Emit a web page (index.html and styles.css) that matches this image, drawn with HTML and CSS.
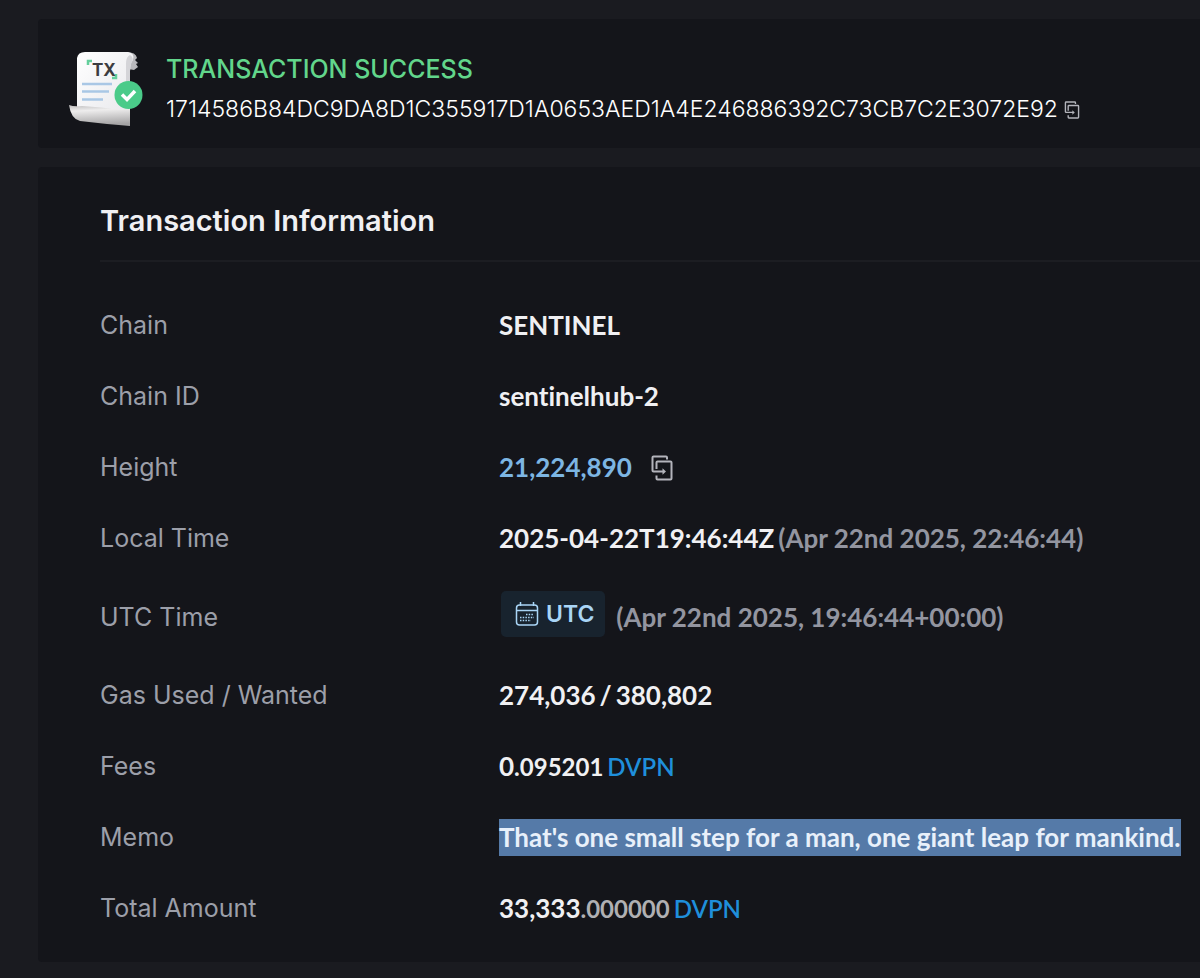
FILE: index.html
```html
<!DOCTYPE html>
<html lang="en">
<head>
<meta charset="utf-8">
<meta name="viewport" content="width=device-width, initial-scale=1">
<title>Transaction</title>
<link rel="stylesheet" href="styles.css">
</head>
<body>
<svg class="sprite" aria-hidden="true">
  <symbol id="copy" viewBox="0 0 22 26">
    <path d="M16 4.500V2.500Q16 1.500 15 1.500H2.500Q1.500 1.500 1.500 2.500V15.500Q1.500 16.500 2.500 16.500H13M5.500 14V7.500Q5.500 6.500 6.500 6.500H19.500Q20.500 6.500 20.500 7.500V23.500Q20.500 24.500 19.500 24.500H6.500Q5.500 24.500 5.500 23.500V20.500" fill="none" stroke="currentColor" stroke-width="2"/>
    <path d="M11.500 13.200L15 16.500L11.500 19.800Z" fill="currentColor"/>
  </symbol>
</svg>
<main class="page">
  <header class="card summary">
    <svg class="receipt" viewBox="0 0 76 80" role="img" aria-label="Transaction receipt">
      <defs>
        <linearGradient id="paper" x1="0" y1="0" x2="1" y2="1"><stop offset="0" stop-color="#fff"/><stop offset="1" stop-color="#e6e6ea"/></linearGradient>
        <linearGradient id="curl" x1="0" y1="0" x2="0.150" y2="1"><stop offset="0" stop-color="#bdbcbd"/><stop offset="0.300" stop-color="#eeeded"/><stop offset="1" stop-color="#a5a4a5"/></linearGradient>
      </defs>
      <path d="M58 3Q68 3 69 9L67 11L70 14L68 15L70 18L66 21L60 20Z" fill="#b9b9bd"/>
      <path d="M9 9Q10 3 17 3L60 3Q67 4 65 11Q62 14 62 22V74L9 62Z" fill="url(#paper)"/>
      <path d="M62 6Q67 9 63 15L62 22V58L58 52V14Q58 8 62 6Z" fill="#d4d4d8"/>
      <path d="M1 56Q6 58 14 57Q34 58 52 61Q60 61 62 56V77Q51 76 39 75L12 72Q3 70 1 56Z" fill="url(#curl)"/>
      <path d="M20 16V12H24M44 29H48V25" fill="none" stroke="#64cf9c" stroke-width="2.500"/>
      <text x="24" y="27" class="receipt-mark">TX</text>
      <path d="M14 35H44M14 42.500H41M14 50.500H35" stroke="#a9c7e5" stroke-width="2.500"/>
      <circle cx="60.500" cy="46" r="14" fill="#4acb89"/>
      <path d="M54 45.500L59 50.500L67 42" fill="none" stroke="#fff" stroke-width="3.500"/>
    </svg>
    <div class="summary-text">
      <p class="status">TRANSACTION SUCCESS</p>
      <p class="hash">1714586B84DC9DA8D1C355917D1A0653AED1A4E246886392C73CB7C2E3072E92
        <button class="copy copy-small" type="button" aria-label="Copy hash"><svg><use href="#copy"/></svg></button></p>
    </div>
  </header>
  <section class="card info">
    <h1 class="title">Transaction Information</h1>
    <dl class="rows">
      <div class="row"><dt>Chain</dt><dd>SENTINEL</dd></div>
      <div class="row"><dt>Chain ID</dt><dd>sentinelhub-2</dd></div>
      <div class="row"><dt>Height</dt><dd class="with-icon"><a class="height" href="#block">21,224,890</a><button class="copy" type="button" aria-label="Copy height"><svg><use href="#copy"/></svg></button></dd></div>
      <div class="row"><dt>Local Time</dt><dd class="pair"><span>2025-04-22T19:46:44Z</span><span class="muted">(Apr 22nd 2025, 22:46:44)</span></dd></div>
      <div class="row"><dt>UTC Time</dt><dd class="utc"><button class="badge" type="button">
        <svg class="calendar" viewBox="0 0 24 24" aria-hidden="true"><rect x="1.500" y="3" width="21" height="20" rx="3" fill="none" stroke="currentColor" stroke-width="1.500"/><path d="M5.500 0V4M18.500 0V4M1.500 8.500H22.500" stroke="currentColor" stroke-width="1.500"/><path d="M11 12.500H19M5 15.500H19M5 18.500H16" stroke="currentColor" stroke-width="1.500" stroke-dasharray="1.500 1.200"/></svg>UTC</button><span class="muted">(Apr 22nd 2025, 19:46:44+00:00)</span></dd></div>
      <div class="row"><dt>Gas Used / Wanted</dt><dd class="pair"><span>274,036</span><span>/</span><span>380,802</span></dd></div>
      <div class="row"><dt>Fees</dt><dd class="pair"><span>0<span class="decimals">.095201</span></span><a class="denom" href="#dvpn">DVPN</a></dd></div>
      <div class="row"><dt>Memo</dt><dd><mark class="memo">That's one small step for a man, one giant leap for mankind.</mark></dd></div>
      <div class="row"><dt>Total Amount</dt><dd class="pair"><span>33,333<span class="decimals faded">.000000</span></span><a class="denom" href="#dvpn">DVPN</a></dd></div>
    </dl>
  </section>
</main>
</body>
</html>
```
FILE: styles.css
```css
* { box-sizing: border-box; }
body {
  margin: 0;
  background: #1a1b20;
  color: #f0f0f3;
  font-family: Inter, "Liberation Sans", sans-serif;
}
p, h1, dl, dd { margin: 0; }
a { text-decoration: none; }
button { border: 0; background: none; font: inherit; }
.sprite { position: absolute; width: 0; height: 0; }
.page {
  display: flex;
  flex-direction: column;
  gap: 19px;
  padding: 19px 0 16px 38px;
}
.card { background: #14151a; border-radius: 4px 0 0 4px; }
.summary {
  display: flex;
  align-items: center;
  gap: 22px;
  padding: 30px 0 19px 30px;
}
.receipt { flex: none; width: 76px; height: 80px; }
.receipt-mark { font: 700 17px Inter, sans-serif; fill: #3c3c40; }
.status { color: #62d68b; font-size: 25px; font-weight: 500; line-height: 40px; }
.hash { color: #fff; font-size: 23px; font-weight: 300; line-height: 40px; white-space: nowrap; }
.copy { padding: 0; color: #b3b4bb; line-height: 0; cursor: pointer; }
.copy svg { width: 22px; height: 26px; }
.copy-small { vertical-align: -2px; }
.copy-small svg { width: 16px; height: 18px; }
.info { padding: 24px 0 18px 62px; }
.title {
  padding-bottom: 9px;
  border-bottom: 2px solid #1c1d22;
  font-size: 29px;
  font-weight: 600;
  line-height: 60px;
}
.rows { padding-top: 28px; }
.row {
  display: grid;
  grid-template-columns: 399px 1fr;
  align-items: center;
  padding: 17px 0;
  line-height: 37px;
}
dt { color: #9c9fa9; font-size: 25px; }
dd {
  font-family: Lato, sans-serif;
  font-size: 26px;
  font-weight: 700;
  font-variant-ligatures: none;
  white-space: nowrap;
}
.with-icon { display: flex; align-items: center; gap: 19px; }
.height { color: #7db6e3; }
.muted { color: #9395a0; }
.utc { display: flex; align-items: center; gap: 11px; height: 52px; padding-left: 2px; }
.badge {
  display: flex;
  align-items: center;
  align-self: flex-start;
  gap: 7px;
  height: 46px;
  padding: 0 11px 0 14px;
  border-radius: 5px;
  background: #18232e;
  color: #a9d5f6;
  font-family: Inter, sans-serif;
  font-size: 23px;
  font-weight: 600;
}
.calendar { width: 24px; height: 24px; }
.pair { display: flex; align-items: baseline; gap: 4px; }
.decimals { font-size: 24px; }
.faded { color: #b0b0b3; }
.denom { color: #1f8fdb; font-size: 24px; font-weight: 600; }
.memo { display: inline-block; background: #557aa8; color: #e8f0fa; }
```
